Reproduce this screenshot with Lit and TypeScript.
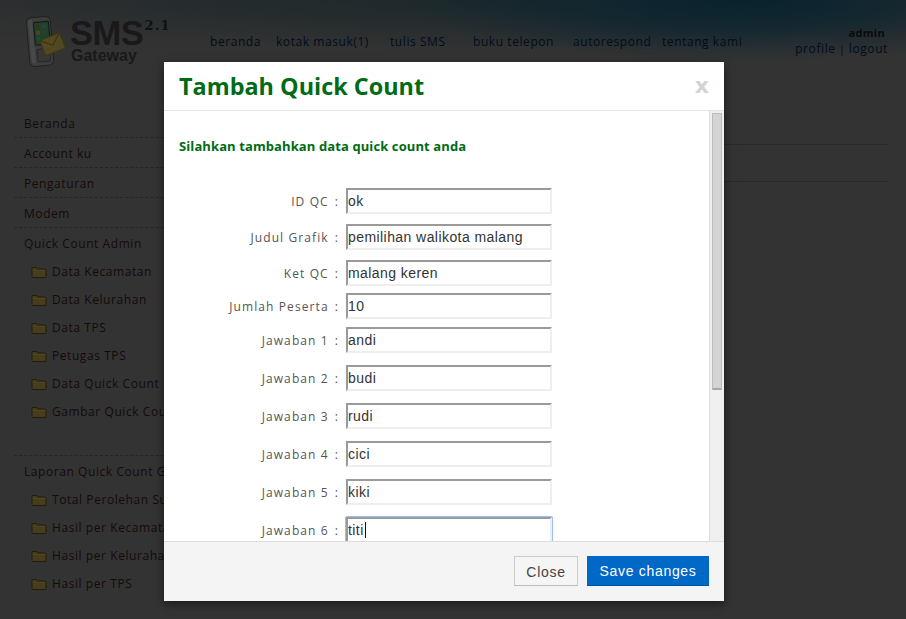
import { LitElement, html, css, svg } from "lit";
import { customElement } from "lit/decorators.js";

const folder = svg`<svg class="folder" width="16" height="13" viewBox="0 0 16 13">
  <path d="M1.5 2.5h4l1.2 1.5h7.3a1 1 0 0 1 1 1v6.5a1 1 0 0 1-1 1H2a1 1 0 0 1-1-1V3a.5.5 0 0 1 .5-.5z" fill="#b09a48" stroke="#54470f"/>
  <path d="M1.5 5.5h13" stroke="#c4ad58" fill="none"/>
</svg>`;

const phone = svg`<svg width="41" height="53" viewBox="0 0 41 53">
  <g transform="rotate(-5 14 26)">
    <rect x="2" y="2" width="24" height="49" rx="5" fill="#989898" stroke="#505050"/>
    <rect x="4" y="4" width="4" height="44" rx="2" fill="#b4b4b4"/>
    <rect x="9" y="7" width="15" height="23" rx="1" fill="#48aa58" stroke="#383838"/>
    <rect x="11" y="10" width="3.5" height="3.5" fill="#b86050"/>
    <rect x="17" y="10" width="3.5" height="3.5" fill="#60a0c8"/>
    <rect x="11" y="16" width="3.5" height="3.5" fill="#c8b450"/>
    <rect x="17" y="16" width="3.5" height="3.5" fill="#a070b0"/>
    <rect x="11" y="22" width="3.5" height="3.5" fill="#60a0c8"/>
    <rect x="10" y="34" width="13" height="13" rx="2" fill="#888" stroke="#5c5c5c"/>
  </g>
  <g transform="rotate(-22 27 29)">
    <rect x="16" y="21" width="21" height="16" fill="#cdb658" stroke="#a08a30"/>
    <path d="M16 21l10.5 9 10.5-9" fill="none" stroke="#8a7420"/>
  </g>
</svg>`;

const nav = ["beranda", "kotak masuk(1)", "tulis SMS", "buku telepon", "autorespond", "tentang kami"];
const top = ["Beranda", "Account ku", "Pengaturan", "Modem"];
const admin = ["Data Kecamatan", "Data Kelurahan", "Data TPS", "Petugas TPS", "Data Quick Count", "Gambar Quick Count"];
const report = ["Total Perolehan Suara", "Hasil per Kecamatan", "Hasil per Kelurahan", "Hasil per TPS"];
const rows = [
  ["ID QC", "ok", "h36"],
  ["Judul Grafik", "pemilihan walikota malang", "h36"],
  ["Ket QC", "malang keren", "h33"],
  ["Jumlah Peserta", "10", "h34"],
  ["Jawaban 1", "andi", "h38"],
  ["Jawaban 2", "budi", "h38"],
  ["Jawaban 3", "rudi", "h38"],
  ["Jawaban 4", "cici", "h38"],
  ["Jawaban 5", "kiki", "h38"],
];

@customElement("app-root")
export class AppRoot extends LitElement {
  static styles = css`
    :host { display: block; }
    .page { position: relative; width: 906px; height: 619px; overflow: hidden; background: #808080;
      font-family: "Open Sans", "Noto Sans", sans-serif; font-size: 12px; letter-spacing: .57px; }
    .header { height: 108px; box-sizing: border-box; display: flex; align-items: flex-start;
      padding: 15px 18px 0 26px;
      background:
        radial-gradient(ellipse 330px 62px at 82% 0, rgb(20,88,118) 0, rgba(30,92,120,.7) 45%, rgba(128,128,128,0) 100%),
        radial-gradient(ellipse 560px 50px at 55% 0, rgba(55,95,105,.75) 0, rgba(128,128,128,0) 100%),
        linear-gradient(rgb(114,118,120), #808080 55px); }
    .logo { display: flex; width: 184px; flex: none; }
    .logo-text { margin-left: 3px; padding-top: 3px; display: flex; flex-direction: column; color: #404040;
      font-family: "Liberation Sans", Arial, sans-serif; font-weight: bold; letter-spacing: 0; }
    .sms-line { display: flex; align-items: flex-start; height: 30px; }
    .sms { font-size: 34.5px; line-height: 30px; letter-spacing: -0.5px; }
    .ver { font: bold 13.5px/14px "DejaVu Serif", serif; color: #2a2a2a; letter-spacing: 1px; margin-left: 1px; margin-top: 0; }
    .gateway { font-size: 16px; line-height: 15px; margin-left: 1px; }
    .nav { display: grid; grid-template-columns: 66px 114px 83px 100px 89px auto; margin-top: 18px; color: #032048; line-height: 18px; white-space: nowrap; }
    .user { margin-left: auto; text-align: right; margin-top: 10px; color: #032048; line-height: 16px; white-space: nowrap; }
    .admin { color: #1a1a1a; font-size: 11px; font-weight: 700; padding-right: 3px; letter-spacing: .3px; }
    .user-links { letter-spacing: .6px; }
    .sep { color: #400; font-size: 10px; margin: 0 3.5px; }
    .main { display: flex; padding: 0 18px 0 14px; color: #381818; }
    .side { width: 190px; flex: none; white-space: nowrap; overflow: hidden; }
    .item { height: 29px; line-height: 32px; padding-left: 10px; border-bottom: 1px dashed #5e5e5e; }
    .item.last { border: 0; }
    .sub { height: 28px; display: flex; align-items: center; gap: 5px; padding-left: 17px; }
    .folder { flex: none; }
    .group { padding-bottom: 30px; border-bottom: 1px dashed #5e5e5e; }
    .content { flex: 1; margin: 36px 0 0 20px; height: 36px; border-top: 1px solid #666; border-bottom: 1px solid #666; }
    .overlay { position: absolute; inset: 0; background: rgba(0,0,0,.6); }
    .modal { position: absolute; left: 164px; top: 62px; width: 560px; height: 539px; background: #fff;
      display: flex; flex-direction: column; box-shadow: 0 3px 9px rgba(0,0,0,.5); }
    .m-head { height: 48px; flex: none; border-bottom: 1px solid #e5e5e5; display: flex; align-items: center;
      justify-content: space-between; padding: 0 15px 0 15px; }
    .title { font-size: 23.4px; line-height: 50px; font-weight: 700; color: #006b14; letter-spacing: 0; }
    .x { font: bold 22px/24px "DejaVu Sans", sans-serif; color: #d4d4d4; letter-spacing: 0; }
    .m-body { flex: 1; min-height: 0; display: flex; }
    .scroll { flex: 1; min-width: 0; overflow: hidden; padding-left: 15px; }
    .scrollbar { width: 15px; box-sizing: border-box; flex: none; background: #f0f0f0; border-left: 1px solid #ddd; padding: 2px 2px 0 2px; }
    .thumb { height: 277px; box-sizing: border-box; background: #d4d4d4; border: 1px solid #bcbcbc; border-bottom: 2px solid #a8a8a8; border-radius: 1px; }
    .lead { margin: 0; padding-top: 26px; font-size: 13px; line-height: 18px; font-weight: 700; color: #006b14; letter-spacing: .1px; }
    .form { padding-top: 33px; }
    .row { display: flex; gap: 7px; }
    .h36 { height: 36px; } .h33 { height: 33px; } .h34 { height: 34px; } .h38 { height: 38px; }
    .label { width: 160px; height: 26px; line-height: 28px; text-align: right; color: #555; white-space: pre; letter-spacing: 1.1px; }
    .colon { margin-left: 6px; }
    .field { position: relative; }
    input { display: block; width: 206px; height: 26px; box-sizing: border-box; margin: 0; padding: 0;
      border: 2px solid; border-color: #9a9a9a #eee #eee #9a9a9a; background: #fff; outline: none;
      font: 14px "Liberation Sans", Arial, sans-serif; letter-spacing: .43px; color: #333; }
    input.focus { box-shadow: 0 0 0 1px #9dbff3; border-radius: 1px; }
    .caret { position: absolute; left: 19px; top: 5px; width: 1px; height: 16px; background: #111; }
    .m-foot { height: 60px; flex: none; box-sizing: border-box; border-top: 1px solid #ddd; background: #f4f4f4;
      display: flex; justify-content: flex-end; align-items: center; gap: 9px; padding: 0 15px 2px 0; }
    button { height: 30px; box-sizing: border-box; margin: 0; padding: 2px 0 0; font: 14px "Liberation Sans", Arial, sans-serif; letter-spacing: .7px; }
    .close { width: 64px; background: #f5f5f5; color: #444; border: 1px solid #ccc; border-bottom-color: #bbb; }
    .save { width: 122px; background: #0069c8; color: #fff; border: 0; border-bottom: 1px solid #00549f; }
  `;

  render() {
    return html`<div class="page">
      <div class="header">
        <div class="logo">${phone}
          <div class="logo-text">
            <div class="sms-line"><span class="sms">SMS</span><span class="ver">2.1</span></div>
            <span class="gateway">Gateway</span>
          </div>
        </div>
        <div class="nav">${nav.map((n) => html`<span>${n}</span>`)}</div>
        <div class="user">
          <div class="admin">admin</div>
          <div class="user-links">profile<span class="sep">|</span>logout</div>
        </div>
      </div>
      <div class="main">
        <div class="side">
          ${top.map((t) => html`<div class="item">${t}</div>`)}
          <div class="item last">Quick Count Admin</div>
          <div class="group">${admin.map((t) => html`<div class="sub">${folder}<span>${t}</span></div>`)}</div>
          <div class="item last">Laporan Quick Count Grafik</div>
          ${report.map((t) => html`<div class="sub">${folder}<span>${t}</span></div>`)}
        </div>
        <div class="content"></div>
      </div>
      <div class="overlay"></div>
      <div class="modal">
        <div class="m-head"><span class="title">Tambah Quick Count</span><span class="x">x</span></div>
        <div class="m-body">
          <div class="scroll">
            <p class="lead">Silahkan tambahkan data quick count anda</p>
            <div class="form">
              ${rows.map((r) => html`<div class="row ${r[2]}"><span class="label">${r[0]}<span class="colon">:</span></span><div class="field"><input .value=${r[1]} /></div></div>`)}
              <div class="row h38"><span class="label">Jawaban 6<span class="colon">:</span></span><div class="field"><input class="focus" .value=${"titi"} /><span class="caret"></span></div></div>
            </div>
          </div>
          <div class="scrollbar"><div class="thumb"></div></div>
        </div>
        <div class="m-foot"><button class="close">Close</button><button class="save">Save changes</button></div>
      </div>
    </div>`;
  }
}
